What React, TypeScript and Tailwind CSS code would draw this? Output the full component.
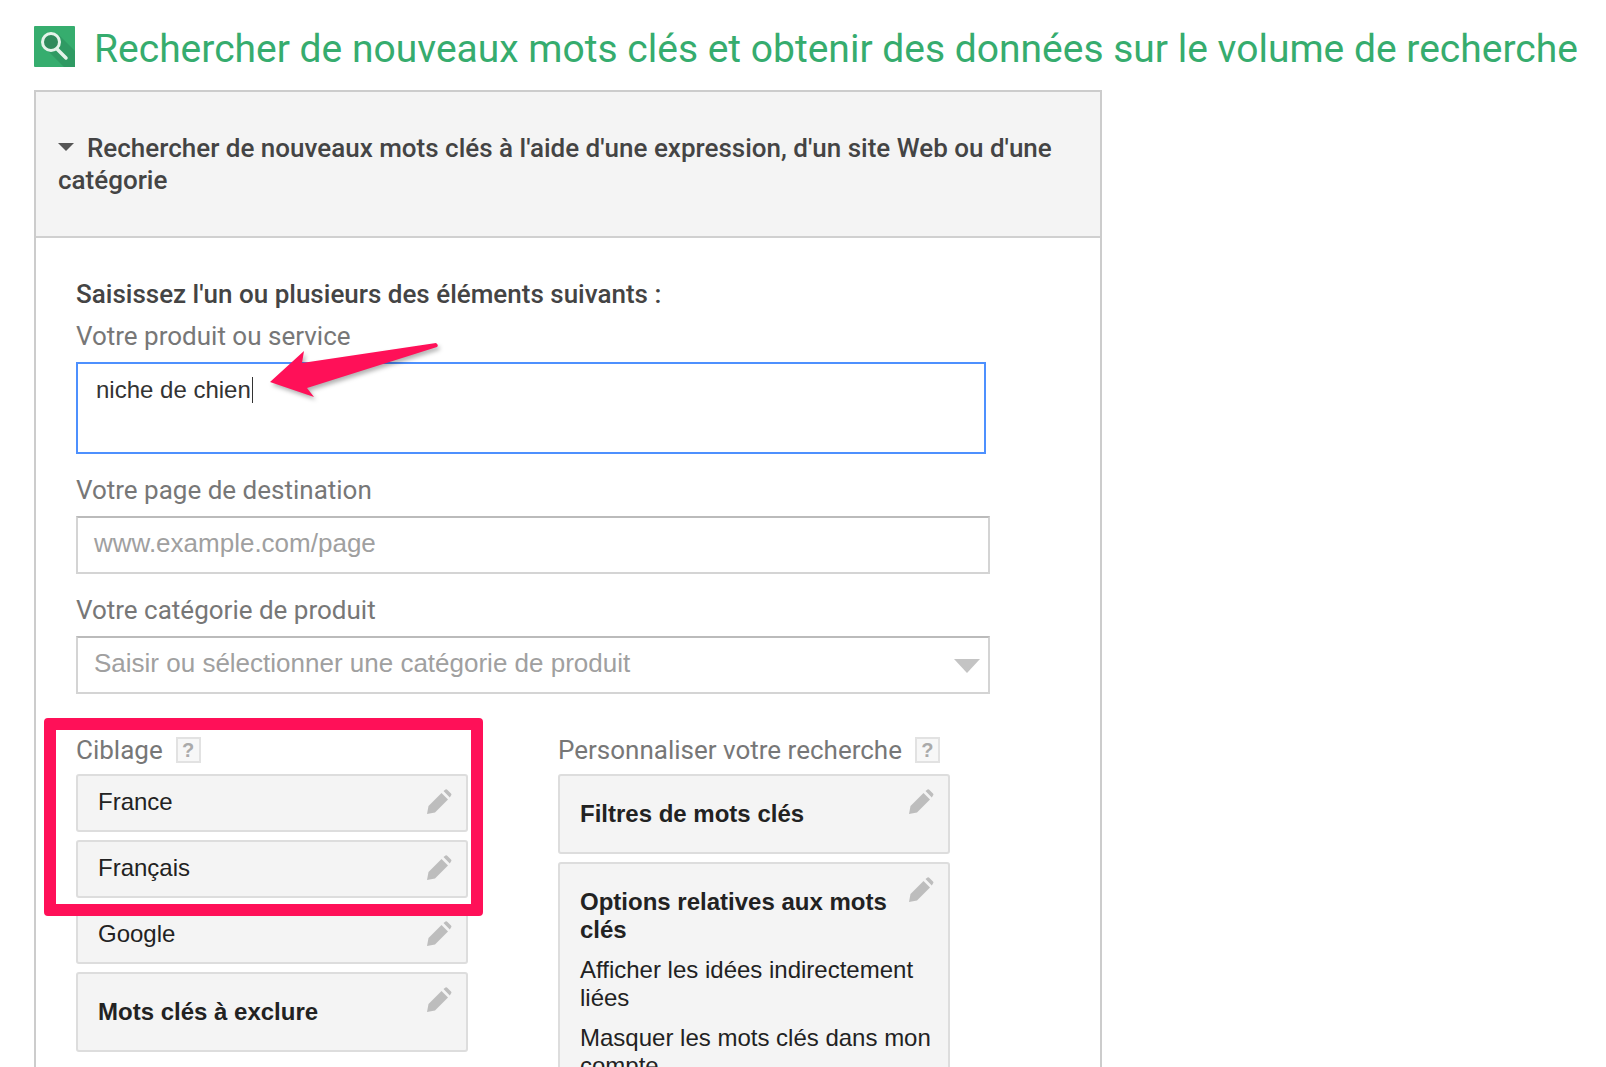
const roboto = "font-['Roboto',sans-serif]"
const arial = "font-['Liberation_Sans',Arial,sans-serif]"

function PencilIcon() {
  return (
    <svg width="26" height="26" viewBox="0 0 26 26" className="block">
      <path d="M1 25 L2.5 17 L15.5 4 L22 10.5 L9 23.5 Z" fill="#bdbdbd" />
      <path d="M17.5 2 L19.5 0.5 Q20.5 0 21.5 1 L25 4.5 Q26 5.5 25 6.5 L23.8 8.6 Z" fill="#bdbdbd" />
    </svg>
  )
}

function HelpBox() {
  return (
    <span className={`inline-flex h-[26px] w-[25px] shrink-0 items-center justify-center border-2 border-[#e2e2e2] bg-[#f7f7f7] text-[20px] font-bold text-[#aaaaaa] ${arial}`}>
      ?
    </span>
  )
}

function Card({ children, className = '' }: { children: React.ReactNode; className?: string }) {
  return (
    <div className={`relative rounded-[3px] border-2 border-[#dddddd] bg-[#f4f4f4] pl-[20px] text-[#222222] ${arial} ${className}`}>
      {children}
      <div className="absolute right-[14px] top-[13px]">
        <PencilIcon />
      </div>
    </div>
  )
}

export default function App() {
  return (
    <div className="relative h-[1067px] w-[1606px] overflow-hidden bg-white">
      {/* Title */}
      <div className="flex h-[90px] items-start pl-[34px] pt-[26px]">
        <svg width="41" height="41" viewBox="0 0 41 41" className="shrink-0">
          <rect width="41" height="41" rx="1" fill="#36ad6e" />
          <path d="M14 25 L30 41 L41 41 L41 25 L24 8 Z" fill="#2f9a63" />
          <circle cx="17" cy="16" r="8.5" fill="#2f8a5c" stroke="#e4f3ea" strokeWidth="3" />
          <path d="M23 23 L32 32" stroke="#e4f3ea" strokeWidth="3.5" strokeLinecap="round" />
        </svg>
        <h1 className={`ml-[19px] mt-px whitespace-nowrap text-[39px] leading-[44px] font-normal text-[#36ac6e] ${roboto}`}>
          Rechercher de nouveaux mots clés et obtenir des données sur le volume de recherche
        </h1>
      </div>

      {/* Panel */}
      <div className="ml-[34px] w-[1068px] border-2 border-[#cccccc]">
        <div className={`h-[146px] border-b-2 border-[#d0d0d0] bg-[#f4f4f4] pl-[22px] pr-[40px] pt-[40px] text-[26px] leading-[32px] font-medium text-[#444444] ${roboto}`}>
          <span className="mr-[13px] inline-block h-0 w-0 -translate-y-[6px] border-x-[8px] border-t-[8px] border-x-transparent border-t-[#555555]" />
          Rechercher de nouveaux mots clés à l'aide d'une expression, d'un site Web ou d'une catégorie
        </div>

        <div className="pl-[40px] pt-[40px]">
          <p className={`text-[26px] leading-[32px] font-medium text-[#444444] ${roboto}`}>
            Saisissez l'un ou plusieurs des éléments suivants :
          </p>
          <label className={`mt-[10px] block text-[26px] leading-[32px] text-[#777777] ${roboto}`}>Votre produit ou service</label>
          <div className={`mt-[10px] h-[92px] w-[910px] border-2 border-[#4d90fe] pl-[18px] pt-[8px] text-[24px] leading-[32px] text-[#333333] ${arial}`}>
            niche de chien<span className="ml-px inline-block h-[26px] w-px translate-y-[5px] bg-[#333333]" />
          </div>

          <label className={`mt-[20px] block text-[26px] leading-[32px] text-[#777777] ${roboto}`}>Votre page de destination</label>
          <div className={`mt-[10px] h-[58px] w-[914px] border-2 border-[#d4d4d4] border-t-[#bbbbbb] pl-[16px] text-[26px] leading-[50px] text-[#a0a0a0] ${arial}`}>
            www.example.com/page
          </div>

          <label className={`mt-[20px] block text-[26px] leading-[32px] text-[#777777] ${roboto}`}>Votre catégorie de produit</label>
          <div className={`relative mt-[10px] h-[58px] w-[914px] border-2 border-[#d4d4d4] border-t-[#bbbbbb] pl-[16px] text-[26px] leading-[50px] text-[#a0a0a0] ${arial}`}>
            Saisir ou sélectionner une catégorie de produit
            <span className="absolute right-[8px] top-[21px] h-0 w-0 border-x-[13px] border-t-[14px] border-x-transparent border-t-[#c4c4c4]" />
          </div>

          <div className="mt-[39px] flex items-start">
            {/* Ciblage */}
            <div className="w-[392px]">
              <div className={`flex h-[40px] items-center gap-[13px] pb-[6px] text-[26px] text-[#777777] ${roboto}`}>
                Ciblage <HelpBox />
              </div>
              <div className="mt-[1px] flex flex-col gap-[8px] text-[24px] leading-[30px]">
                <Card className="h-[58px] pt-[11px]">France</Card>
                <Card className="h-[58px] pt-[11px]">Français</Card>
                <Card className="h-[58px] pt-[11px]">Google</Card>
                <Card className="h-[80px] pt-[23px] font-bold">Mots clés à exclure</Card>
              </div>
            </div>

            {/* Personnaliser */}
            <div className="ml-[90px] w-[392px]">
              <div className={`flex h-[40px] items-center gap-[13px] whitespace-nowrap pb-[6px] text-[26px] text-[#777777] ${roboto}`}>
                Personnaliser votre recherche <HelpBox />
              </div>
              <div className="mt-[1px] flex flex-col gap-[8px] text-[24px] leading-[28px]">
                <Card className="h-[80px] pt-[24px] font-bold">Filtres de mots clés</Card>
                <Card className="pb-[10px] pr-[14px] pt-[24px]">
                  <p className="font-bold">Options relatives aux mots clés</p>
                  <p className="mt-[12px]">Afficher les idées indirectement liées</p>
                  <p className="mt-[12px]">Masquer les mots clés dans mon compte</p>
                </Card>
              </div>
            </div>
          </div>
        </div>
      </div>

      {/* Annotations */}
      <svg width="180" height="70" viewBox="260 340 180 70" className="absolute left-[260px] top-[340px] drop-shadow-[2px_3px_2px_rgba(0,0,0,0.3)]">
        <path d="M270 382 L304 351 L302 363 L436 343 Q439 345 437 347 L307 388 L314 397 Z" fill="#ff1058" />
      </svg>
      <div className="absolute left-[44px] top-[718px] h-[198px] w-[439px] rounded-[4px] border-[12px] border-[#ff1058]" />
    </div>
  )
}
